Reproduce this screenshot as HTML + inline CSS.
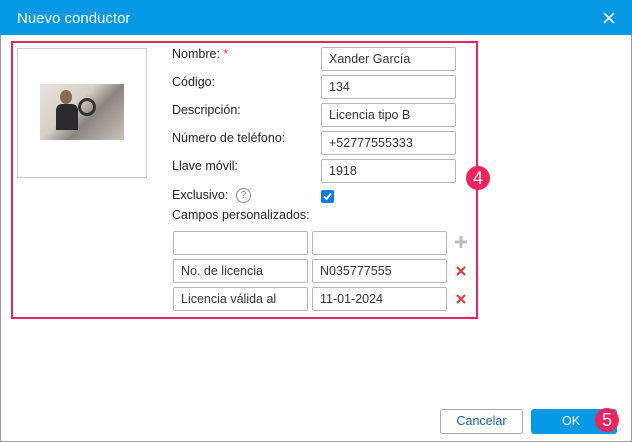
<!DOCTYPE html>
<html><head><meta charset="utf-8"><style>
*{box-sizing:border-box;margin:0;padding:0}
body{width:632px;height:442px;overflow:hidden;background:#fff;font-family:"Liberation Sans",Arial,sans-serif;font-size:12px;color:#222;position:relative}
.win{position:absolute;left:0;top:0;width:632px;height:442px;border:1px solid #9a9a9a;border-top:none}
.hdr{position:absolute;left:0;top:0;width:632px;height:35px;background:#069ae6;color:#fff;font-size:15px;padding:10px 0 0 17px}
.a{position:absolute}
.lbl{position:absolute;left:172px;font-size:12.5px;color:#222}
.in{position:absolute;border:1px solid #b5b5b5;border-radius:2px;background:#fff;font-size:12.5px;color:#333;padding:0 0 0 7px;height:24px;line-height:22px}
.red{position:absolute;left:11px;top:41px;width:467px;height:278px;border:2px solid #f0245a}
.badge{position:absolute;width:24px;height:24px;border-radius:50%;background:#f0245a;color:#fff;font-size:18px;text-align:center;line-height:24px}
</style></head><body>
<div class="win"></div>
<div class="hdr">Nuevo conductor</div>
<svg class="a" style="left:602px;top:11px" width="14" height="14"><path d="M2 2L12 12M12 2L2 12" stroke="#fff" stroke-width="1.6"/></svg>
<div class="red"></div>
<div class="a" style="left:17px;top:48px;width:130px;height:130px;border:1px solid #ccc"></div>
<div class="a" style="left:40px;top:84px;width:84px;height:56px;background:linear-gradient(135deg,#e8e4dc 0%,#d6d0c4 40%,#8a8580 60%,#c9c3b8 100%)">
<div class="a" style="left:20px;top:6px;width:12px;height:14px;border-radius:50%;background:#8a6a50"></div>
<div class="a" style="left:16px;top:20px;width:22px;height:26px;background:#2a2a2c;border-radius:6px 6px 0 0"></div>
<div class="a" style="left:38px;top:14px;width:18px;height:18px;border:3px solid #333;border-radius:50%"></div>
</div>
<div class="lbl" style="top:47px">Nombre: <span style="color:#e53935">*</span></div>
<div class="lbl" style="top:75px">Código:</div>
<div class="lbl" style="top:103px">Descripción:</div>
<div class="lbl" style="top:131px">Número de teléfono:</div>
<div class="lbl" style="top:159px">Llave móvil:</div>
<div class="lbl" style="top:188px">Exclusivo:</div>
<div class="a" style="left:236px;top:188px;width:15px;height:15px;border:1px solid #888;border-radius:50%;font-size:10px;color:#777;text-align:center;line-height:13px">?</div>
<div class="lbl" style="top:208px">Campos personalizados:</div>
<div class="in" style="left:321px;top:47px;width:135px">Xander García</div>
<div class="in" style="left:321px;top:75px;width:135px">134</div>
<div class="in" style="left:321px;top:103px;width:135px">Licencia tipo B</div>
<div class="in" style="left:321px;top:131px;width:135px">+52777555333</div>
<div class="in" style="left:321px;top:159px;width:135px">1918</div>
<div class="a" style="left:321px;top:190px;width:13px;height:13px;background:#0a7de6;border-radius:2px"><svg width="13" height="13"><path d="M3 6.5L5.5 9L10 3.5" stroke="#fff" stroke-width="1.8" fill="none"/></svg></div>
<div class="badge" style="left:466px;top:166px">4</div>
<div class="in" style="left:173px;top:231px;width:135px"></div>
<div class="in" style="left:312px;top:231px;width:135px"></div>
<div class="a" style="left:454px;top:235px;width:14px;height:14px"><svg width="14" height="14"><path d="M7 1V13M1 7H13" stroke="#bbb" stroke-width="3"/></svg></div>
<div class="in" style="left:173px;top:259px;width:135px">No. de licencia</div>
<div class="in" style="left:312px;top:259px;width:135px">N035777555</div>
<div class="in" style="left:173px;top:287px;width:135px">Licencia válida al</div>
<div class="in" style="left:312px;top:287px;width:135px">11-01-2024</div>
<svg class="a" style="left:456px;top:266px" width="10" height="10"><path d="M1 1L9 9M9 1L1 9" stroke="#e53935" stroke-width="2"/></svg>
<svg class="a" style="left:456px;top:294px" width="10" height="10"><path d="M1 1L9 9M9 1L1 9" stroke="#e53935" stroke-width="2"/></svg>
<div class="a" style="left:440px;top:409px;width:83px;height:25px;border:1px solid #aaa;border-radius:3px;color:#1b5fa8;text-align:center;line-height:23px;font-size:12.5px">Cancelar</div>
<div class="a" style="left:531px;top:409px;width:86px;height:25px;background:#069ae6;border-radius:3px;color:#fff;text-align:center;line-height:25px;padding-right:6px;font-size:12.5px">OK</div>
<div class="badge" style="left:595px;top:408px">5</div>
</body></html>
